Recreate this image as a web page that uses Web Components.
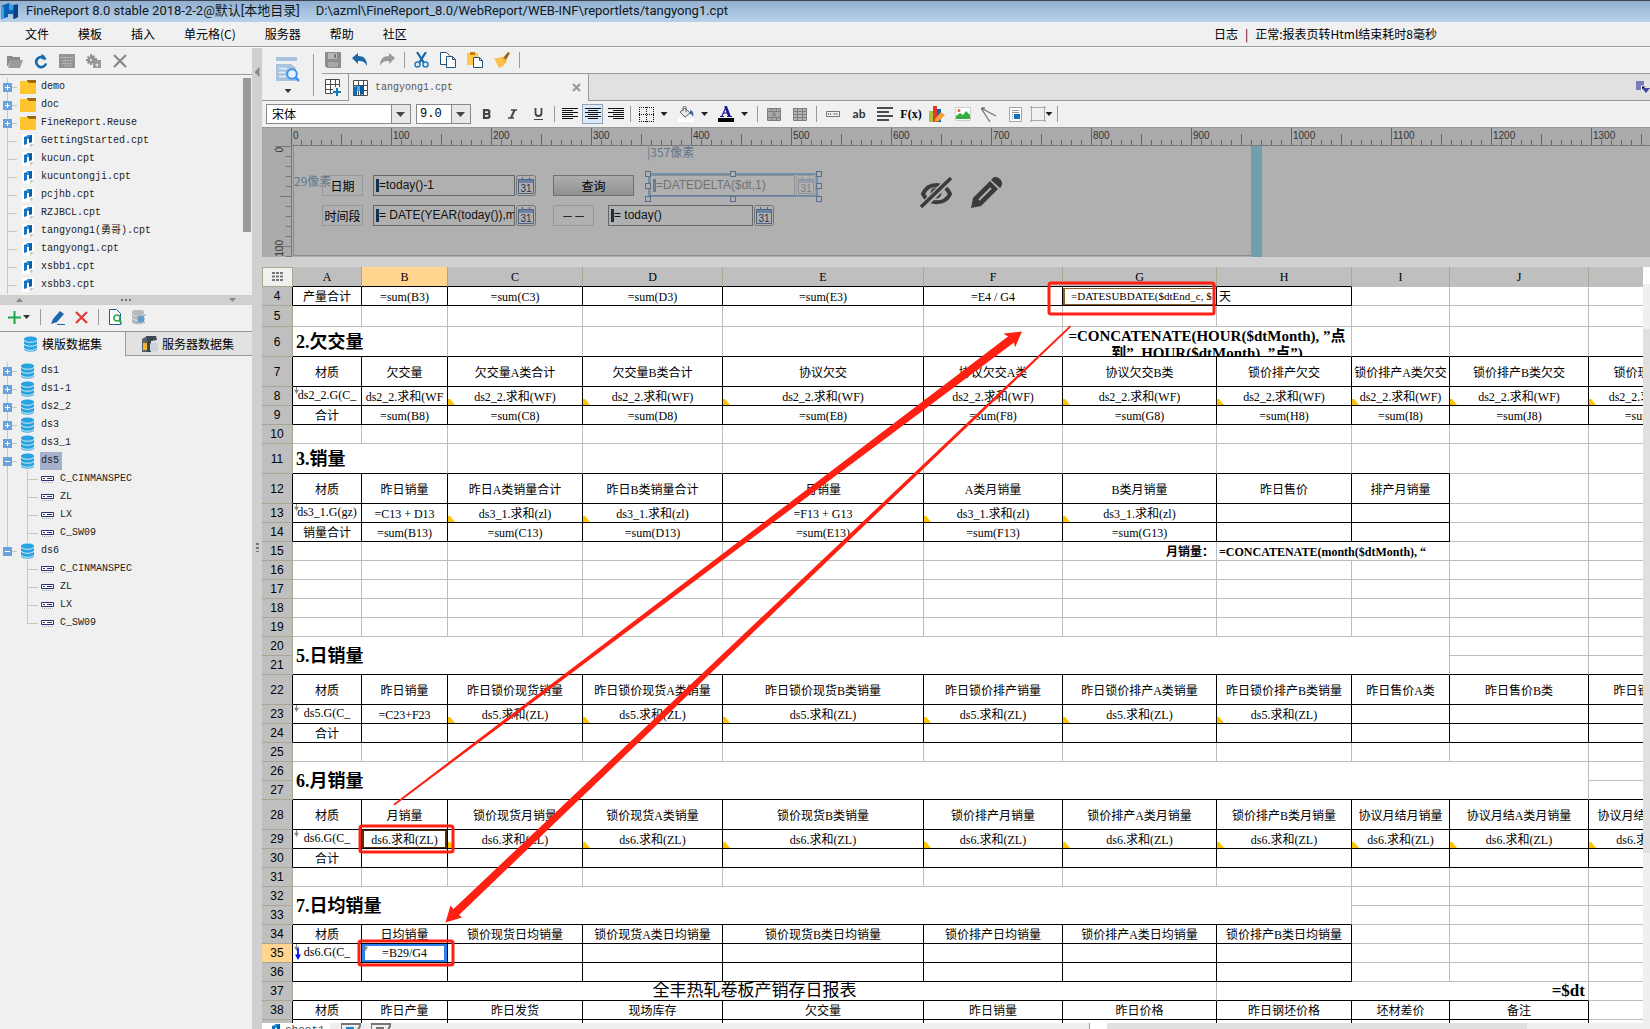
<!DOCTYPE html>
<html lang="zh-CN">
<head>
<meta charset="utf-8">
<title>FineReport 8.0</title>
<style>
  html, body { margin: 0; height: 100%; }
  body { overflow: hidden; background: #d0d0d0; color: #000; font: 12px/18px "Liberation Serif", "Noto Sans CJK SC", serif; }
</style>
</head>
<body>
<report-designer></report-designer>
<script>
const MONO = '"Liberation Mono", "Noto Sans CJK SC", monospace';
const CJK = '"Noto Sans CJK SC", sans-serif';
const SERIF = '"Liberation Serif", "Noto Sans CJK SC", serif';

/* Base class: renders markup and styles in an open shadow root. */
class View extends HTMLElement {
  constructor() { super(); this.attachShadow({ mode: 'open' }); }
  connectedCallback() {
    this.shadowRoot.innerHTML = `<style>*{box-sizing:border-box}${this.css()}</style>${this.html()}`;
  }
  css() { return ''; }
  html() { return ''; }
}

const DB = '<path fill="#29a3e0" d="M1 3c0-3.500 13-3.500 13 0v10c0 3.500-13 3.500-13 0z"/><path d="M1 4c1 3 12 3 13 0M1 8c1 3 12 3 13 0M1 12c1 3 12 3 13 0" stroke="#d8f0fb" fill="none"/>';
const ICONS = {
  logo: [17, 18, '<path fill="#0c5fae" d="M0 4l8-3v7h4V3l5-1v13l-5 2v-5H7v3l-7 2z"/><path fill="#2fa4ea" d="M8 1l4 2v5H8zM0 4l3 1v11l-3 1z"/><path fill="#0a3f80" d="M13 3h4v12l-4 2z"/>'],
  folder: [16, 14, '<path fill="#a06a10" d="M7 0h9v6H7z"/><path fill="#ffc531" d="M0 1h7l2 2h7v11H0z"/>'],
  file: [12, 14, '<path fill="#fff" d="M0 0h12v10l-4 4H0z"/><path fill="#1474c4" d="M2 3l3-1v8l-3 1z"/><path fill="#1d94e0" d="M5 1h5v7l-2 1V5H5z"/><path fill="#0c5ca4" d="M7 2l3-1v7l-3 1z"/><path fill="#c9c9c9" d="M12 10l-4 4v-4z"/>'],
  db: [15, 16, DB],
  field: [13, 8, '<path fill="#fff" stroke="#2b2f77" d="M.5 1.500h12v4H.5z"/><path fill="#2b2f77" d="M2 3h2v1H2zM6 3h5v1H6z"/><path stroke="#9aa" stroke-dasharray="1 1" d="M1 7.500h12"/>'],
  open: [16, 13, '<path fill="#8b8b8b" d="M0 1h5l1 1h7v3H4L1 11H0z"/><path fill="#9b9b9b" d="M4 5h12l-3 8H1z"/>'],
  refresh: [14, 15, '<path d="M11.500 5.500A5 5 0 1 0 12 9.500" fill="none" stroke="#1467a8" stroke-width="2.600"/><path fill="#1467a8" d="M7 0l1 6 3-4z"/>'],
  list: [16, 14, '<path fill="#939393" d="M0 0h16v14H0z"/><path stroke="#b4b4b4" fill="none" d="M1 3.500h14M3 6.500h3M3 9.500h3M8 6.500h5M8 9.500h5M8 11.500h5M6.500 5v8"/>'],
  gears: [16, 15, '<path fill="#929292" d="M4 0h2v2l2-1 1 2-1 1h3v3H9l1 2-2 1-2-1v2H4V9l-2 1-1-2 1-1H0V5h2L1 3l1-1 2 1z"/><path fill="#999" d="M8 6h7v8H7v-3z"/><circle cx="5" cy="6" r="1.200" fill="#ddd"/><circle cx="11" cy="11" r="1.500" fill="#ddd"/>'],
  xgray: [14, 14, '<path d="M1 1l12 12M13 1L1 13" stroke="#888" stroke-width="2.200"/>'],
  preview: [25, 25, '<path fill="#a9c3df" d="M0 0h21v4H0z"/><path fill="#a9c3df" d="M0 7h15l5 4v13H0z"/><path stroke="#e8f1fa" stroke-width="1.500" d="M3 11.500h8M3 15.500h6M3 19.500h7"/><circle cx="16" cy="17" r="4.800" fill="#eaf4ff" stroke="#3b95f2" stroke-width="2"/><path stroke="#3b95f2" stroke-width="2.500" d="M19 20l4 4"/>'],
  save: [16, 16, '<path fill="#8d8d8d" d="M0 0h16v16H2l-2-2z"/><path fill="#b9b9b9" d="M3 1h9v6H3z"/><path fill="#a9a9a9" d="M3 10h10v5H3z"/><path fill="#7d7d7d" d="M9 2h2v4H9z"/>'],
  undo: [16, 14, '<path fill="#1d66a8" d="M0 5l6-5v3c6 0 9 3 9 10-2-4-4-5-9-5v3z"/>'],
  redo: [16, 14, '<path fill="#999" d="M16 5l-6-5v3C4 3 1 6 1 13c2-4 4-5 9-5v3z"/>'],
  cut: [15, 16, '<path d="M3 0l7 11M12 0L5 11" stroke="#1467a8" stroke-width="2.200"/><circle cx="3.500" cy="12.500" r="2.500" fill="none" stroke="#1b7ec2" stroke-width="1.500"/><circle cx="11.500" cy="12.500" r="2.500" fill="none" stroke="#1b7ec2" stroke-width="1.500"/>'],
  copy: [16, 16, '<path fill="#fff" stroke="#24537d" d="M.5.5h6l3 3v9h-9z"/><path fill="#fff" stroke="#24537d" d="M6.500 4.500h6l3 3v8h-9z"/><path stroke="#24537d" fill="none" d="M12.500 4.500v3h3"/>'],
  paste: [16, 16, '<path fill="#ffc84a" d="M0 1h11v12H0z"/><path fill="#c67d14" d="M3 0h5v3H3z"/><path fill="#fff" stroke="#24537d" d="M6.500 5.500h6l3 3v7h-9z"/><path stroke="#24537d" fill="none" d="M12.500 5.500v3h3"/>'],
  brush: [16, 16, '<path fill="#a3621d" d="M9 6l5-6 2 1-4 7z"/><path fill="#f9c04a" d="M0 6c4 1 6-1 9-1l4 4c-2 3-4 6-8 7z"/><path stroke="#dfa02e" d="M8 5l4 5"/>'],
  newsheet: [16, 17, '<path fill="#fff" stroke="#4b4b4b" d="M.5.5h14v14H.5zM.5 5.500h14M.5 10.500h14M5.500.5v14M10.500.5v14"/><path fill="#f0f0f0" d="M8 8h8v9H8z"/><path fill="#1478bf" d="M11 9h2v3h3v2h-3v3h-2v-3H8v-2h3z"/>'],
  sheet: [16, 16, '<path fill="#fff" stroke="#4b4b4b" d="M.5.5h14v15H.5zM.5 5.500h14M.5 10.500h14M5.500.5v15M10.500.5v15"/><path fill="#1467b0" d="M0 7l4-1v9l-4 1z"/><path fill="#37b0ec" d="M4 6h6v5H4z"/><path fill="#0f5596" d="M7 6l4-1v9l-4 1z"/>'],
  close: [9, 9, '<path d="M1 1l7 7M8 1L1 8" stroke="#999" stroke-width="2.200"/>'],
  bold: [9, 10, '<path fill="none" stroke="#444" stroke-width="2.200" d="M2 1.200h3.500a1.900 1.900 0 0 1 0 3.800H2zM2 5h4a2 2 0 0 1 0 3.900H2z"/>'],
  italic: [9, 10, '<path fill="none" stroke="#444" stroke-width="1.500" d="M3 1h6M0 9h6"/><path stroke="#444" stroke-width="2" d="M6.500 1L3 9"/>'],
  underline: [9, 12, '<path fill="none" stroke="#444" stroke-width="1.800" d="M1.500 0v5a3 3 0 0 0 6 0V0"/><path stroke="#444" d="M0 11.500h9"/>'],
  left: [16, 12, '<path stroke="#111" d="M0 .5h16M0 2.500h11M0 4.500h16M0 6.500h11M0 8.500h16M0 10.500h11"/>'],
  center: [16, 12, '<path stroke="#111" d="M0 .5h16M3 2.500h10M0 4.500h16M3 6.500h10M0 8.500h16M3 10.500h10"/>'],
  right: [16, 12, '<path stroke="#111" d="M0 .5h16M5 2.500h11M0 4.500h16M5 6.500h11M0 8.500h16M5 10.500h11"/>'],
  border: [15, 15, '<path fill="none" stroke="#111" stroke-dasharray="1 1" d="M0 .5h15M0 7.500h15M0 14.500h15M.5 0v15M7.500 0v15M14.500 0v15"/>'],
  fill: [16, 16, '<path fill="#fff" d="M0 12h16v4H0z"/><path fill="#e8e8e8" stroke="#666" d="M2 6l5-4 5 5-5 4z"/><path fill="none" stroke="#666" d="M5 5V1.500a1.500 1.500 0 0 1 3 0V6"/><path fill="#33699f" d="M12 4c3 1 4 3 3 7-1-2-1-3-3-3z"/>'],
  fcolor: [16, 16, '<path fill="#000" d="M0 12h16v4H0z"/><path fill="none" stroke="#14148c" stroke-width="1.200" d="M2 10.500h4M9 10.500h5M4 10L8 1M5 7h5"/><path stroke="#14148c" stroke-width="2.600" d="M7.500 0l4 10.500"/>'],
  merge: [14, 13, '<path fill="#a9a9a9" stroke="#7e7e7e" d="M.5.5h13v12H.5zM.5 3.500h13M.5 9.500h13M4.500 0v3M9.500 0v3M4.500 10v3M9.500 10v3"/><circle cx="7" cy="6.500" r="1.500" fill="none" stroke="#777"/>'],
  unmerge: [14, 13, '<path fill="#b4b4b4" stroke="#7e7e7e" d="M.5.5h13v12H.5zM.5 3.500h13M.5 6.500h13M.5 9.500h13M4.500 0v13M9.500 0v13"/>'],
  textcell: [14, 6, '<path fill="#f4f4f4" stroke="#777" d="M.5.5h13v5H.5z"/><path stroke="#777" d="M2.500 2v2M4.500 2v2M7 3h5"/>'],
  lines: [16, 14, '<path stroke="#4a4a4a" stroke-width="2" d="M0 1h16M0 5h12M0 9h16M0 13h12"/>'],
  chart: [16, 16, '<path fill="#a9c53a" d="M0 5h4v11H0z"/><path fill="#e23b2e" d="M4 0h4v16H4z"/><path fill="#1764ab" d="M8 3h4v13H8z"/><path fill="#f3a13b" d="M6 13l6-7 4 3-6 6-4 1z"/>'],
  image: [16, 14, '<path fill="#fff" stroke="#ccc" d="M.5.5h15v13H.5z"/><path fill="#35ad3f" d="M1 12V9l4-3 3 2 3-4 4 4v4z"/><circle cx="4" cy="3.500" r="1.500" fill="#e8642c"/>'],
  slash: [16, 15, '<path stroke="#777" stroke-width="1.300" d="M0 1l15 8M0 1l9 14M1 1h3"/>'],
  subreport: [13, 15, '<path fill="#fff" stroke="#a5a5a5" d="M.5.5h12v14H.5z"/><path stroke="#999" d="M3 3.500h7M3 5.500h7M3 7.500h1M3 9.500h1M3 11.500h1"/><path fill="#1673c2" d="M5 7h6v5H5z"/>'],
  box: [16, 16, '<path fill="none" stroke="#aaa" d="M1.500 0v16M14.500 0v16M0 1.500h16M0 14.500h16"/>'],
  plus: [13, 13, '<path fill="#1ba648" d="M5.500 0h2v5.500H13v2H7.500V13h-2V7.500H0v-2h5.500z"/>'],
  pencil: [14, 15, '<path fill="#1c66ad" d="M0 14l2-5 7-8 4 3-7 8z"/><path stroke="#1c66ad" d="M6 14.500h8"/>'],
  xred: [13, 13, '<path d="M1 1l11 11M12 1L1 12" stroke="#e23b35" stroke-width="2.200"/>'],
  docfind: [13, 16, '<path fill="#fff" stroke="#1a5c93" d="M.5.5h7l4 4v11H.5z"/><circle cx="8" cy="9" r="3" fill="#fff" stroke="#2aab4d" stroke-width="1.500"/><path stroke="#2aab4d" stroke-width="1.800" d="M10 11l3 4"/>'],
  dbgray: [14, 15, '<path fill="#b3bac0" d="M0 2c0-3 12-3 12 0v10c0 3-12 3-12 0z"/><path d="M0 4c1 3 11 3 12 0M0 8c1 3 11 3 12 0" stroke="#e0e0e0" fill="none"/><circle cx="9" cy="9" r="3.500" fill="#6a9cca"/><path stroke="#6a9cca" d="M5 13l9-9M5 6l8 7"/>'],
  server: [16, 16, '<path fill="#3c4750" d="M4 0h10l1 4-6 1v11H4z"/><path fill="#56646f" d="M0 3l5-3v16H0z"/><path fill="#f5b52e" d="M1 7h4v7H1z"/><path fill="#c9d3dc" d="M8 8c0-2 8-2 8 0v6c0 2-8 2-8 0z"/>'],
  cal: [20, 21, '<rect x=".5" y=".5" width="19" height="20" rx="2" fill="#b0b0b0" stroke="#777"/><path fill="#6d82a3" d="M3 4h14v4H3z"/><path fill="none" stroke="#4f6485" d="M2.500 4.500h15v14h-15zM6.500 2v3M13.500 2v3"/>'],
  eye: [33, 31, '<path fill="none" stroke="#3d3a3a" stroke-width="4" d="M3 17C8 5 25 5 30 17 25 28 8 28 3 17z"/><circle cx="16" cy="16" r="5.500" fill="#3d3a3a"/><path stroke="#b0b0b0" stroke-width="7" d="M2 30L31 1"/><path stroke="#3d3a3a" stroke-width="3.500" d="M1 30L31 1"/>'],
  pen: [31, 31, '<path fill="#3d3a3a" d="M0 31l2-10L19 4l8 8L10 29z"/><path fill="#3d3a3a" d="M21 2c2-3 6-2 8 0s3 5 1 8l-1 1-9-8z"/><path stroke="#b0b0b0" stroke-width="2" d="M8 23L20 11"/>'],
  corner: [11, 9, '<path stroke="#777" stroke-width="2" stroke-dasharray="3 1" d="M0 1h11M0 4.500h11M0 8h11"/>'],
  dock: [14, 12, '<path fill="#7a7cc2" d="M0 0h8v5H5v4H0z"/><path stroke="#fff" d="M5.500 9V5H10"/><path fill="#3f44a0" d="M6 7h8l-4 5z"/>'],
  grip: [20, 8, '<path fill="none" stroke="#777" stroke-width="2" d="M0 6V1h20l-3 6"/><path fill="#1d8ad0" d="M5 4h8v4H5z"/>'],
  grip2: [20, 8, '<path fill="none" stroke="#777" stroke-width="2" d="M0 6V1h20l-3 6M5 5h8"/>'],
  expand: [3, 9, '<path fill="#777" d="M0 0h3v2H0zM0 4h3v2H0zM0 8h3v1H0z"/>']
};

class UiIcon extends View {
  css() { return ':host{display:inline-block;flex:none;line-height:0}svg{display:block}'; }
  html() {
    const [w, h, body] = ICONS[this.getAttribute('name')];
    return `<svg width="${w}" height="${h}" viewBox="0 0 ${w} ${h}" aria-hidden="true">${body}</svg>`;
  }
}
customElements.define('ui-icon', UiIcon);

class UiCaret extends View {
  css() { return ':host{flex:none;width:7px;height:4px;background:#333;clip-path:polygon(0 0,100% 0,50% 100%);display:block}'; }
}
customElements.define('ui-caret', UiCaret);

class TitleBar extends View {
  css() { return `:host{display:flex;align-items:center;height:22px;padding:0 0 2px 1px;border-top:1px solid #3c4450;background:linear-gradient(#93b0d0,#b9d2ec);font:13px/18px Roboto,${CJK};color:#101820;white-space:pre;gap:8px}span+span{margin-left:8px}`; }
  html() { return '<ui-icon name="logo"></ui-icon><span>FineReport 8.0 stable 2018-2-2@默认[本地目录]</span><span>D:\\azml\\FineReport_8.0/WebReport/WEB-INF\\reportlets/tangyong1.cpt</span>'; }
}
customElements.define('title-bar', TitleBar);

class MenuBar extends View {
  css() { return `:host{display:flex;height:25px;align-items:center;background:#f0f0f0;border-bottom:1px solid #999;padding-left:25px;font-family:${CJK}}
    nav{display:flex;gap:29px;flex:1}button{all:unset;white-space:nowrap;line-height:20px}
    p{display:flex;gap:7px;margin:0 213px 0 0;white-space:nowrap}`; }
  html() {
    return `<nav>${['文件', '模板', '插入', '单元格(C)', '服务器', '帮助', '社区'].map(t => `<button>${t}</button>`).join('')}</nav><p><span>日志</span><span>|</span><span>正常:报表页转Html结束耗时8毫秒</span></p>`;
  }
}
customElements.define('menu-bar', MenuBar);

/* One row of a tree: icon, state (plus/minus), child, outer, last, selected. */
class TreeRow extends View {
  css() { return `:host{display:flex;align-items:center;height:18px;font:10px/18px ${MONO};color:#222;position:relative}
    .rail{width:20px;height:18px;flex:none;display:flex;align-items:center;padding-left:3px;background:linear-gradient(#c9c9ba,#c9c9ba) 7px 0/1px 100% no-repeat}
    .rail::after{content:"";height:1px;flex:1;background:#c9c9ba;margin-right:3px}
    .leaf{padding-left:8px}
    i{width:9px;height:9px;flex:none;background:linear-gradient(#fff,#fff) 50% 50%/5px 1px no-repeat,#6aa3da}
    i.plus{background:linear-gradient(#fff,#fff) 50% 50%/5px 1px no-repeat,linear-gradient(#fff,#fff) 50% 50%/1px 5px no-repeat,#6aa3da}
    .child{width:41px;padding-left:27px;background-position:27px 0}
    .child.blank{background:linear-gradient(#c9c9ba,#c9c9ba) 7px 0/1px 100% no-repeat,linear-gradient(#c9c9ba,#c9c9ba) 27px 0/1px 100% no-repeat}
    .last{background-size:1px 50%}
    ui-icon{width:17px;margin-right:3px}
    ui-icon[name=file]{padding-left:2px}
    .child+ui-icon{width:13px;margin-right:5px}
    slot{display:block;white-space:nowrap;padding:0 1px;margin-right:auto}
    :host([selected]) slot{background:#a5b1cb;padding-right:3px}`; }
  html() {
    const s = this.getAttribute('state'), child = this.hasAttribute('child');
    const cls = child ? 'rail child' : s ? 'rail' : 'rail leaf';
    return `<span class="${cls}${this.hasAttribute('outer') ? ' blank' : ''}${this.hasAttribute('last') ? ' last' : ''}">${s ? `<i class="${s}"></i>` : ''}</span><ui-icon name="${this.getAttribute('icon')}"></ui-icon><slot></slot>`;
  }
}
customElements.define('tree-row', TreeRow);

class SidePanel extends View {
  css() { return `:host{display:flex;flex-direction:column;width:252px;flex:none;background:#f0f0f0}
    .bar{display:flex;align-items:center;height:27px;border-bottom:1px solid #999;flex:none}
    .files{padding-left:7px;gap:11px}
    button{all:unset;display:flex;align-items:center}
    .tree{height:220px;overflow:hidden;padding-top:3px;flex:none;display:flex}
    .rows{flex:1}.thumb{width:8px;height:154px;background:#999;margin-right:1px}
    .split{height:10px;flex:none;background:#d0d0d0;display:flex;align-items:center;justify-content:space-between;padding:0 16px}
    .up{transform:rotate(180deg)}ui-caret{background:#888}
    .dots{width:10px;height:2px;background:repeating-linear-gradient(90deg,#777 0 2px,transparent 2px 4px)}
    .data{padding:0 0 2px 8px;height:27px;gap:10px}.data ui-caret{background:#333;margin-left:2px}
    .sep{width:1px;height:16px;background:#999}
    .tabs{display:flex;height:24px;flex:none;font-family:${CJK}}
    .tabs button{box-sizing:border-box;gap:4px;height:24px;line-height:24px}
    .t1{width:125px;padding-left:23px}.t2{flex:1;padding-left:16px;background:#e2e2e2;border-left:1px solid #999;border-bottom:1px solid #999}
    .ds{padding-top:6px;flex:1}`; }
  html() {
    const files = ['GettingStarted', 'kucun', 'kucuntongji', 'pcjhb', 'RZJBCL', 'tangyong1(勇哥)', 'tangyong1', 'xsbb1', 'xsbb3'];
    const fields = outer => ['C_CINMANSPEC', 'ZL', 'LX', 'C_SW09'].map((f, i) => `<tree-row child icon="field" ${outer ? 'outer' : ''} ${i === 3 && !outer ? 'last' : ''}>${f}</tree-row>`).join('');
    return `<div class="bar files">${['open', 'refresh', 'list', 'gears', 'xgray'].map(n => `<button aria-label="${n}"><ui-icon name="${n}"></ui-icon></button>`).join('')}</div>
    <div class="tree"><div class="rows">
    ${['demo', 'doc', 'FineReport.Reuse'].map(n => `<tree-row icon="folder" state="plus">${n}</tree-row>`).join('')}
    ${files.map(n => `<tree-row icon="file">${n}.cpt</tree-row>`).join('')}</div><div class="thumb"></div></div>
    <div class="split"><ui-caret class="up"></ui-caret><span class="dots"></span><ui-caret></ui-caret></div>
    <div class="bar data"><button aria-label="add"><ui-icon name="plus"></ui-icon><ui-caret></ui-caret></button><span class="sep"></span>
    <button aria-label="edit"><ui-icon name="pencil"></ui-icon></button><button aria-label="delete"><ui-icon name="xred"></ui-icon></button><span class="sep"></span>
    <button aria-label="preview"><ui-icon name="docfind"></ui-icon></button><button aria-label="connection"><ui-icon name="dbgray"></ui-icon></button></div>
    <div class="tabs"><button class="t1"><ui-icon name="db"></ui-icon>模版数据集</button><button class="t2"><ui-icon name="server"></ui-icon>服务器数据集</button></div>
    <div class="ds">${['ds1', 'ds1-1', 'ds2_2', 'ds3', 'ds3_1'].map(n => `<tree-row icon="db" state="plus">${n}</tree-row>`).join('')}
    <tree-row icon="db" state="minus" selected>ds5</tree-row>${fields(true)}
    <tree-row icon="db" state="minus" last>ds6</tree-row>${fields(false)}</div>`;
  }
}
customElements.define('side-panel', SidePanel);

class MainToolbar extends View {
  css() { return `:host{display:flex;height:53px;background:#f0f0f0}
    button{all:unset;display:flex;align-items:center}
    .big{box-sizing:border-box;width:60px;flex:none;flex-direction:column;align-items:center;border-bottom:1px solid #999;padding:9px 8px 0 0;gap:7px;position:relative}
    .big::after{content:"";position:absolute;left:51px;top:6px;width:1px;height:42px;background:#999}
    .right{flex:1;display:flex;flex-direction:column;min-width:0}
    .icons{display:flex;align-items:center;height:25px;padding:0 0 2px 3px;gap:11px}
    .sep{width:1px;height:16px;background:#999;margin:0 -2px}
    .tabs{height:28px;display:flex;border-top:1px solid #999}
    .new{box-sizing:border-box;width:26px;padding-left:3px;border-bottom:1px solid #999}
    .tab{display:flex;align-items:center;width:241px;border:solid #999;border-width:0 1px;padding:0 7px 0 4px;font:10px/20px ${MONO};color:#555;gap:6px}
    .tab span{flex:1}.rest{flex:1;background:#e1e1e1;border-bottom:1px solid #999;display:flex;justify-content:flex-end;align-items:center;overflow:hidden}`; }
  html() {
    const b = n => `<button aria-label="${n}"><ui-icon name="${n}"></ui-icon></button>`;
    return `<button class="big" aria-label="preview"><ui-icon name="preview"></ui-icon><ui-caret></ui-caret></button>
    <div class="right"><div class="icons">${b('save')}${b('undo')}${b('redo')}<span class="sep"></span>${b('cut')}${b('copy')}${b('paste')}${b('brush')}<span class="sep"></span></div>
    <div class="tabs"><button class="new" aria-label="new"><ui-icon name="newsheet"></ui-icon></button><div class="tab"><ui-icon name="sheet"></ui-icon><span>tangyong1.cpt</span>${b('close')}</div><div class="rest"><ui-icon name="dock"></ui-icon></div></div></div>`;
  }
}
customElements.define('main-toolbar', MainToolbar);

class FormatBar extends View {
  css() { return `:host{display:flex;align-items:center;height:27px;background:#f0f0f0;border-bottom:1px solid #999;padding-left:4px}
    .sel{position:relative;height:20px;margin-right:5px;flex:none}.sel::after{content:"";position:absolute;right:6px;top:8px;width:9px;height:5px;background:#444;clip-path:polygon(0 0,100% 0,50% 100%);pointer-events:none}
    select{appearance:none;height:20px;border:1px solid #888;border-radius:0;background:linear-gradient(90deg,#888 1px,#e8e8e8 1px) right/19px 100% no-repeat,#fff;padding:0 5px;color:#000;font:12px/18px ${CJK};display:block;width:100%}
    .font{width:145px}.size{width:55px;margin-right:2px}.size select{padding:0 3px;font-family:"Liberation Mono",monospace}
    button{all:unset;box-sizing:border-box;height:20px;min-width:26px;flex:none;display:flex;align-items:center;justify-content:center;font:bold 12px/20px Lato,sans-serif;color:#333}
    .al{min-width:23px}.on{border:1px solid #8fa3bb;background:#dbe8f7;min-width:21px;margin:0 1px}
    .drop{min-width:40px;gap:7px;padding-right:2px}.fx{font:bold 12px/20px "Liberation Serif",serif;color:#000}
    .sep{width:1px;height:16px;background:#999;flex:none;margin:0 3px}.g2{margin:0 3px}ui-caret{background:#222}`; }
  html() {
    const b = (n, c = '', t) => `<button class="${c}" aria-label="${n}">${t || `<ui-icon name="${n}"></ui-icon>`}</button>`;
    const d = n => `<button class="drop" aria-label="${n}"><ui-icon name="${n}"></ui-icon><ui-caret></ui-caret></button>`;
    return `<div class="sel font"><select aria-label="字体"><option>宋体</option></select></div><div class="sel size"><select aria-label="字号"><option>9.0</option></select></div>
    ${b('bold')}${b('italic')}${b('underline')}<span class="sep"></span>
    ${b('left', 'al')}${b('center', 'al on')}${b('right', 'al')}<span class="sep"></span>
    ${d('border')}${d('fill')}${d('fcolor')}<span class="sep g2"></span>${b('merge')}${b('unmerge')}<span class="sep g2"></span>
    ${b('textcell')}${b('ab', '', 'ab')}${b('lines')}${b('fx', 'fx', 'F(x)')}${['chart', 'image', 'slash', 'subreport'].map(n => b(n)).join('')}
    <button aria-label="box"><ui-icon name="box"></ui-icon><ui-caret></ui-caret></button><span class="sep"></span>`;
  }
}
customElements.define('format-bar', FormatBar);

/* A form widget on the parameter canvas: an input with a calendar button. */
class DateWidget extends View {
  css() { return `:host{display:flex;gap:1px;min-width:0;font:12px/19px "Liberation Sans",sans-serif}
    label{display:flex;align-items:center;flex:1;min-width:0;height:21px;border:1px solid #666;padding-left:2px}
    label::before{content:"";width:3px;height:13px;flex:none;background:#12324f}
    input{all:unset;flex:1;width:0;min-width:0;color:#111;white-space:nowrap;overflow:hidden}
    button{all:unset;position:relative;display:block;line-height:0;flex:none}
    b{position:absolute;left:0;right:0;top:8px;text-align:center;font:10px/11px "Liberation Sans",sans-serif;color:#1f3154}`; }
  html() { return `<label><input aria-label="${this.getAttribute('label')}" value="${this.getAttribute('value')}"></label><button aria-label="日历"><ui-icon name="cal"></ui-icon><b>31</b></button>`; }
}
customElements.define('date-widget', DateWidget);

class ParamPane extends View {
  css() { return `:host{display:block;background:#ababab;height:129px;overflow:hidden;font:12px/20px ${CJK}}
    .h{display:flex;height:18px;margin-left:29px;border-bottom:1px solid #777;overflow:hidden}
    .h div{width:100px;flex:none;padding-left:1px;font:10px/15px "Liberation Sans",sans-serif;color:#333;border-left:1px solid #666;
      background:repeating-linear-gradient(90deg,transparent 0 9px,#666 9px 10px) 0 100%/99px 5px no-repeat,linear-gradient(#666,#666) 49px 100%/1px 11px no-repeat}
    .b{display:flex;height:111px}
    .v{width:30px;flex:none;border-right:1px solid #777;position:relative;color:#333;font:10px/12px "Liberation Sans",sans-serif;
      background:repeating-linear-gradient(#777 0 1px,transparent 1px 10px) 100% 0/5px 100% no-repeat,repeating-linear-gradient(#777 0 1px,transparent 1px 50px) 100% 0/11px 100% no-repeat,repeating-linear-gradient(#777 0 1px,transparent 1px 100px) 100% 0/16px 100% no-repeat}
    .v span{position:absolute;left:12px;writing-mode:vertical-rl;transform:rotate(180deg)}
    .canvas{position:relative;flex:1;background:#b0b0b0}
    .canvas>*{position:absolute}
    .form{left:1px;top:0;width:958px;height:110px;border:solid #8d8d8d;border-width:0 0 1px 1px}
    .edge{left:959px;top:0;bottom:0;width:11px;background:#6fa0ad}
    .lab{height:21px;width:41px;border:1px solid #989898;text-align:center;white-space:nowrap}
    .query{appearance:none;padding:0;font:inherit;color:#000;height:21px;width:81px;border:1px solid #707070;background:linear-gradient(#adadad,#909090);text-align:center;line-height:19px}
    .hint{color:#62758c;white-space:nowrap}
    .selected{border:2px solid #7590ab;width:170px;height:24px;display:flex;align-items:center}.selected date-widget{opacity:.4;flex:1}
    .dot{width:6px;height:6px;border:1px solid #56708b;background:#b0b0b0}`; }
  html() {
    const at = (x, y) => `style="left:${x}px;top:${y}px"`;
    const dots = [[353, 25], [438, 25], [524, 25], [353, 37], [524, 37], [353, 50], [438, 50], [524, 50]].map(([x, y]) => `<i class="dot" ${at(x, y)}></i>`).join('');
    return `<div class="h">${Array.from({ length: 14 }, (_, i) => `<div>${i * 100}</div>`).join('')}</div>
    <div class="b"><div class="v"><span style="top:1px">0</span><span style="top:94px">100</span></div>
    <div class="canvas"><div class="form"></div><div class="edge"></div>
    <span class="hint" ${at(2, 25)}>29像素</span><span class="hint" ${at(355, -4)}>|357像素</span>
    <span class="lab" ${at(30, 29)}>日期</span><date-widget label="日期" value="=today()-1" style="left:81px;top:29px;width:163px"></date-widget>
    <span class="lab" ${at(30, 59)}>时间段</span><date-widget label="时间段" value="= DATE(YEAR(today()),m" style="left:81px;top:59px;width:163px"></date-widget>
    <button class="query" ${at(261, 29)}>查询</button><span class="lab" ${at(261, 59)}>－－</span>
    <date-widget label="结束" value="= today()" style="left:316px;top:59px;width:166px"></date-widget>
    <div class="selected" ${at(356, 27)}><date-widget label="dt" value="=DATEDELTA($dt,1)"></date-widget></div>${dots}
    <ui-icon name="eye" ${at(628, 31)}></ui-icon><ui-icon name="pen" ${at(679, 31)}></ui-icon></div></div>`;
  }
}
customElements.define('param-pane', ParamPane);

/* Column widths, row heights and cell contents of the report. */
const COLS = [69, 86, 135, 140, 201, 139, 154, 135, 98, 139, 122];
const BOXES = [[4, 4, 8], [7, 9, 11], [12, 14, 9], [22, 24, 11], [28, 30, 11], [34, 36, 8], [38, 39, 10]];
const TALL = { 5: 21, 6: 30, 7: 30, 11: 30, 12: 30, 22: 30, 28: 30 };
const sum = n => 'ABCDEFGHIJK'.split('').map((c, i) => i ? `=sum(${c}${n})` : '合计');
const rep = (s, n) => Array(n).fill(s);
const M = s => '~' + s;          // leading ~ : yellow marker at the lower left
const DATA = {
  4: ['产量合计', '=sum(B3)', '=sum(C3)', '=sum(D3)', '=sum(E3)', '=E4 / G4', { t: '=DATESUBDATE($dtEnd_c, $', c: 'cut' }, { t: '天', c: 'left' }],
  6: [{ t: '2.欠交量', span: 2, c: 'title' }, '', '', '', '', { t: '=CONCATENATE(HOUR($dtMonth), ”点到”, HOUR($dtMonth), ”点”)', span: 2, c: 'concat' }],
  7: ['材质', '欠交量', '欠交量A类合计', '欠交量B类合计', '协议欠交', '协议欠交A类', '协议欠交B类', '锁价排产欠交', '锁价排产A类欠交', '锁价排产B类欠交', '锁价现货欠交'],
  8: [{ t: 'ds2_2.G(C_', c: 'arrow' }, 'ds2_2.求和(WF', ...rep(M('ds2_2.求和(WF)'), 9)],
  9: sum(8),
  11: [{ t: '3.销量', span: 2, c: 'title' }],
  12: ['材质', '昨日销量', '昨日A类销量合计', '昨日B类销量合计', '月销量', 'A类月销量', 'B类月销量', '昨日售价', '排产月销量'],
  13: [{ t: 'ds3_1.G(gz)', c: 'arrow' }, '=C13 + D13', M('ds3_1.求和(zl)'), M('ds3_1.求和(zl)'), '=F13 + G13', M('ds3_1.求和(zl)'), M('ds3_1.求和(zl)')],
  14: ['销量合计', ...sum(13).slice(1, 7)],
  15: ['', '', '', '', '', '', { t: '月销量：', c: 'rightb' }, { t: '=CONCATENATE(month($dtMonth), “', span: 2, c: 'left strong' }],
  20: [{ t: '5.日销量', span: 9, rows: 2, c: 'title' }],
  22: ['材质', '昨日销量', '昨日锁价现货销量', '昨日锁价现货A类销量', '昨日锁价现货B类销量', '昨日锁价排产销量', '昨日锁价排产A类销量', '昨日锁价排产B类销量', '昨日售价A类', '昨日售价B类', '昨日钢坯价格'],
  23: [{ t: 'ds5.G(C_', c: 'arrow' }, '=C23+F23', ...rep(M('ds5.求和(ZL)'), 6)],
  24: ['合计'],
  26: [{ t: '6.月销量', span: 10, rows: 2, c: 'title' }],
  28: ['材质', '月销量', '锁价现货月销量', '锁价现货A类销量', '锁价现货B类销量', '锁价排产月销量', '锁价排产A类月销量', '锁价排产B类月销量', '协议月结月销量', '协议月结A类月销量', '协议月结B类月销量'],
  29: [{ t: 'ds6.G(C_', c: 'arrow' }, { t: 'ds6.求和(ZL)', c: 'source' }, ...rep(M('ds6.求和(ZL)'), 9)],
  30: ['合计'],
  32: [{ t: '7.日均销量', span: 8, rows: 2, c: 'title' }],
  34: ['材质', '日均销量', '锁价现货日均销量', '锁价现货A类日均销量', '锁价现货B类日均销量', '锁价排产日均销量', '锁价排产A类日均销量', '锁价排产B类日均销量'],
  35: [{ t: 'ds6.G(C_', c: 'arrow blue' }, { t: '=B29/G4', c: 'active' }],
  37: [{ t: '全丰热轧卷板产销存日报表', span: 7, c: 'report' }, { t: '=$dt', span: 3, c: 'dt' }],
  38: ['材质', '昨日产量', '昨日发货', '现场库存', '欠交量', '昨日销量', '昨日价格', '昨日钢坯价格', '坯材差价', '备注']
};

class SheetGrid extends View {
  css() { return `:host{display:block;overflow:hidden;flex:1;min-width:0;background:#fff}
    table{border-collapse:separate;border-spacing:0;table-layout:fixed;width:1449px}
    td,th{padding:0;text-align:center;font-weight:400;border:solid #bdbdbd;border-width:0 1px 1px 0;overflow:hidden;white-space:nowrap;position:relative}
    td.br{border-right-color:#000}td.bb{border-bottom-color:#000}
    th{background:#bfbfbf;border-color:#a9a692;font:12px/16px "Liberation Sans",sans-serif}
    thead th{font-family:"Liberation Serif",serif;height:20px;border-bottom-color:#bfbfbf;border-top:0}
    thead th.bb{border-bottom-color:#000}thead th.corner{background:#f0f0f0;border:1px solid #a9a692}
    tbody th.br{border-right-color:#000}th.on{background:#ffd58f}
    th ui-icon{display:inline-block}
    td div{overflow:hidden;line-height:15px;padding-top:3px;text-align:center}
    td .left{text-align:left;padding-left:2px}
    td .cut{text-align:left;font-size:11px;padding:0 0 0 6px;border:solid #8c6028;border-width:1px 0 1px 2px}
    td .strong{font-weight:700}
    td .title{font:bold 18px/26px ${SERIF};text-align:left;padding:0 0 0 3px}
    td .concat{font:bold 15px/17px ${SERIF};white-space:normal;height:29px;padding:1px 0 0;word-break:break-all}
    td .rightb{font-weight:700;text-align:right;padding-right:2px}
    td .report{font:17px/18px ${SERIF};padding:0}td .dt{font:bold 17px/18px ${SERIF};text-align:right;padding:0 3px 0 0}
    td .mark::before{content:"";position:absolute;left:0;bottom:0;width:7px;height:6px;background:#ffc400;clip-path:polygon(0 0,30% 0,100% 100%,0 100%)}
    td .arrow::before,td .active::before{content:"";position:absolute;left:1px;top:0;width:5px;height:7px;background:#888;clip-path:polygon(40% 0,60% 0,60% 40%,100% 40%,50% 100%,0 40%,40% 40%)}
    td .arrow{padding:0 0 2px}
    td .blue::after{content:"";position:absolute;left:2px;top:4px;width:6px;height:12px;background:#0a14f0;clip-path:polygon(35% 0,65% 0,65% 55%,100% 55%,50% 100%,0 55%,35% 55%)}
    td .source{outline:1px solid #5a2d0c;outline-offset:-1px;border:solid #5a2d0c;border-width:0 2px}
    td .active{border:solid #2f80ed;border-width:2px 3px;padding:0;line-height:14px}`; }
  html() {
    const inBox = (r, c) => BOXES.some(([a, b, w]) => r >= a && r <= b && c < w);
    const cls = (r, c, span = 1, rows = 1) => {
      const right = c + span - 1, bottom = r + rows - 1;
      return [(right >= 0 && inBox(r, right)) || inBox(r, right + 1) ? 'br' : '', inBox(bottom, c) || inBox(bottom + 1, c) ? 'bb' : ''].join(' ');
    };
    const head = 'ABCDEFGHIJ'.split('').map((l, c) => `<th scope="col" class="${l === 'B' ? 'on' : ''} ${c < 8 ? 'bb' : ''}">${l}</th>`).join('') + '<th></th>';
    let body = '', covered = {};
    for (let r = 4; r <= 39; r++) {
      const data = DATA[r] || [];
      let c = 0, i = 0, row = '';
      while (c < 11) {
        if (covered[r] > c) { c++; continue; }
        let cell = data[i++] || '';
        if (typeof cell === 'string') cell = cell[0] === '~' ? { t: cell.slice(1), c: 'mark' } : { t: cell, c: '' };
        const span = cell.span || 1, rows = cell.rows || 1;
        if (rows > 1) covered[r + 1] = span;
        row += `<td class="${cls(r, c, span, rows)}" colspan="${span}" rowspan="${rows}">${cell.t ? `<div class="${cell.c}">${cell.t}</div>` : ''}</td>`;
        c += span;
      }
      const edge = inBox(r, 0) ? 'br' : '';
      body += `<tr style="height:${TALL[r] || 19}px"><th scope="row" class="${r === 35 ? 'on' : ''} ${edge}">${r < 39 ? r : ''}</th>${row}</tr>`;
    }
    return `<table><colgroup><col style="width:31px">${COLS.map(w => `<col style="width:${w}px">`).join('')}</colgroup>
      <thead><tr><th class="corner"><ui-icon name="corner"></ui-icon></th>${head}</tr></thead><tbody>${body}</tbody></table>`;
  }
}
customElements.define('sheet-grid', SheetGrid);

class SheetTabs extends View {
  css() { return `:host{display:flex;height:6px;flex:none;background:#efefef;overflow:hidden;align-items:flex-start}
    .t{display:flex;gap:3px;width:68px;background:#fff;padding-left:8px;font:11px/14px ${MONO};color:#444;margin-right:11px}
    ui-icon{margin-right:10px}.t ui-icon{margin:0}
    .bar{margin-left:auto;width:561px;height:6px;display:flex;border-left:1px solid #999}.bar i{width:17px;background:#fff}.bar b{width:420px;background:#e0e0e0}`; }
  html() { return '<span class="t"><ui-icon name="file"></ui-icon>sheet1</span><ui-icon name="grip"></ui-icon><ui-icon name="grip2"></ui-icon><div class="bar"><i></i><b></b></div>'; }
}
customElements.define('sheet-tabs', SheetTabs);

/* Red annotation boxes and tapered arrows drawn over the window. */
class MarkupLayer extends View {
  css() { return ':host{position:absolute;inset:0;pointer-events:none}svg{display:block;width:100%;height:100%}'; }
  html() {
    return `<svg fill="none" stroke="#fe2012" stroke-width="3"><rect x="1049" y="283" width="165" height="31" rx="2"/><rect x="360" y="826" width="93" height="26" rx="2"/><rect x="359" y="941" width="94" height="24" rx="2"/>
    <g fill="#fe2012" stroke="none"><path d="M393.500 804L1008 336.500l-4.500-3L1022 331.500l-7 16-1-5L394.500 805.500z"/><path d="M1070 325.500L453.500 909l-3-3.500L445.500 922.500l16.500-5-3-2.500L1071 327z"/></g></svg>`;
  }
}
customElements.define('markup-layer', MarkupLayer);

class ReportDesigner extends View {
  css() { return `:host{display:flex;flex-direction:column;height:100vh;position:relative;overflow:hidden}
    .work{display:flex;flex:1;min-height:0;padding-top:1px;background:#fafafa}
    .split{width:10px;background:#d0d0d0;flex:none;display:flex;flex-direction:column;align-items:center;padding-top:19px}
    .tri{width:5px;height:10px;background:#888;clip-path:polygon(100% 0,100% 100%,0 50%)}
    .split ui-icon{margin-top:466px}
    main{flex:1;min-width:0;display:flex;flex-direction:column;background:#d0d0d0}
    param-pane{margin-bottom:10px}
    .grid{flex:1;min-height:0;display:flex}
    .scroll{width:7px;background:#efefef;display:flex;flex-direction:column}.scroll i{height:17px;background:#fff}.scroll b{margin-top:45px;height:524px;background:#e0e0e0}`; }
  html() {
    return `<title-bar></title-bar><menu-bar></menu-bar><div class="work"><side-panel></side-panel><div class="split"><span class="tri"></span><ui-icon name="expand"></ui-icon></div>
    <main><main-toolbar></main-toolbar><format-bar></format-bar><param-pane></param-pane><div class="grid"><sheet-grid></sheet-grid><div class="scroll"><i></i><b></b></div></div><sheet-tabs></sheet-tabs></main></div><markup-layer></markup-layer>`;
  }
}
customElements.define('report-designer', ReportDesigner);
</script>
</body>
</html>
